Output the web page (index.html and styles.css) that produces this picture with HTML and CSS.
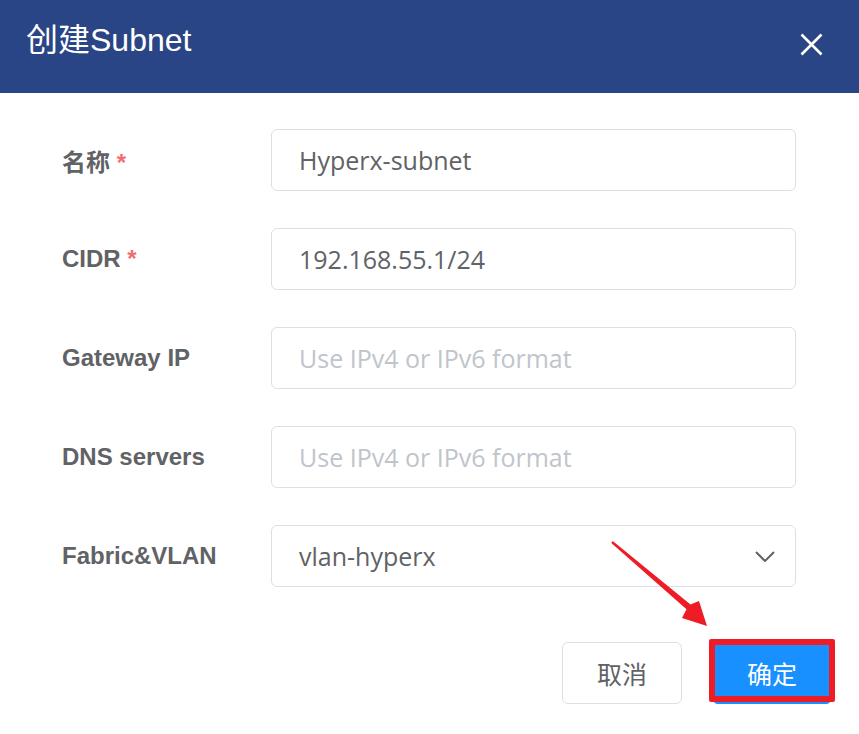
FILE: index.html
```html
<!DOCTYPE html>
<html lang="zh">
<head>
<meta charset="utf-8">
<title>创建Subnet</title>
<link rel="stylesheet" href="styles.css">
</head>
<body>
<div class="dialog">
  <header class="dialog-header">
    <h1 class="dialog-title">创建Subnet</h1>
    <button class="close-btn" aria-label="close">
      <svg width="23" height="23" viewBox="0 0 23 23"><path d="M1.5 1.5 L21.5 21.5 M21.5 1.5 L1.5 21.5" stroke="#fff" stroke-width="2.6" fill="none"/></svg>
    </button>
  </header>
  <form class="form">
    <div class="row">
      <label class="label">名称 <span class="req">*</span></label>
      <input class="field" type="text" value="Hyperx-subnet" readonly>
    </div>
    <div class="row">
      <label class="label">CIDR <span class="req">*</span></label>
      <input class="field" type="text" value="192.168.55.1/24" readonly>
    </div>
    <div class="row">
      <label class="label">Gateway IP</label>
      <input class="field" type="text" placeholder="Use IPv4 or IPv6 format">
    </div>
    <div class="row">
      <label class="label">DNS servers</label>
      <input class="field" type="text" placeholder="Use IPv4 or IPv6 format">
    </div>
    <div class="row">
      <label class="label">Fabric&amp;VLAN</label>
      <div class="field select">
        <span>vlan-hyperx</span>
        <svg class="chevron" width="20" height="11" viewBox="0 0 20 11"><path d="M1 1 L10 10 L19 1" stroke="#606266" stroke-width="2" fill="none"/></svg>
      </div>
    </div>
    <div class="footer">
      <button type="button" class="btn btn-cancel">取消</button>
      <button type="button" class="btn btn-primary">确定<span class="highlight"></span></button>
    </div>
  </form>
  <svg class="arrow" width="859" height="734" viewBox="0 0 859 734">
    <polygon points="611.3,542.9 612.7,541.1 690.5,604.5 699,601 707,626 682,618 686.5,609.3" fill="#ee1c25"/>
  </svg>
</div>
</body>
</html>
```

FILE: styles.css
```css
html, body {
  margin: 0;
  padding: 0;
  background: #fff;
}

.dialog {
  position: relative;
  width: 859px;
  height: 734px;
  overflow: hidden;
  background: #fff;
}

.dialog-header {
  height: 93px;
  box-sizing: border-box;
  background: #2a4585;
  display: flex;
  justify-content: space-between;
  align-items: flex-start;
  padding: 24px 36px 0 26px;
}

.dialog-title {
  margin: 0;
  font-family: "Liberation Sans", "Noto Sans CJK SC", sans-serif;
  font-weight: normal;
  font-size: 32px;
  line-height: 32px;
  height: 32px;
  color: #fff;
}

.close-btn {
  margin-top: 9px;
  padding: 0;
  border: 0;
  background: transparent;
  width: 23px;
  height: 23px;
  display: block;
}

.close-btn svg {
  display: block;
}

.form {
  padding: 36px 0 0 62px;
  display: flex;
  flex-direction: column;
  gap: 37px;
  margin: 0;
}

.row {
  display: grid;
  grid-template-columns: 209px 525px;
  align-items: center;
  height: 62px;
}

.label {
  font-family: "Liberation Sans", "Noto Sans CJK SC", sans-serif;
  font-weight: bold;
  font-size: 24px;
  color: #606266;
  white-space: nowrap;
}

.req {
  color: #f56c6c;
  font-weight: bold;
}

.field {
  box-sizing: border-box;
  width: 525px;
  height: 62px;
  border: 1px solid #dcdfe6;
  border-radius: 6px;
  padding: 0 27px;
  font-family: "Open Sans", "Noto Sans CJK SC", sans-serif;
  font-size: 25px;
  color: #606266;
  background: #fff;
  outline: none;
}

.field::placeholder {
  color: #c0c4cc;
}

.select {
  display: flex;
  align-items: center;
  justify-content: space-between;
  padding-right: 20px;
}

.chevron {
  display: block;
}

.footer {
  display: flex;
  justify-content: flex-end;
  gap: 30px;
  padding-right: 27px;
  margin-top: 18px;
}

.btn {
  position: relative;
  box-sizing: border-box;
  width: 120px;
  height: 62px;
  border-radius: 6px;
  font-family: "Noto Sans CJK SC", sans-serif;
  font-size: 25px;
  padding: 0;
}

.btn-cancel {
  background: #fff;
  border: 1px solid #dcdfe6;
  color: #606266;
}

.btn-primary {
  background: #1890ff;
  border: 1px solid #1890ff;
  color: #fff;
}

.highlight {
  position: absolute;
  left: -4px;
  top: -4px;
  width: 126px;
  height: 63px;
  box-sizing: border-box;
  border: 6px solid #ee1c25;
  border-radius: 2px;
}

.arrow {
  position: absolute;
  left: 0;
  top: 0;
  pointer-events: none;
}
```
